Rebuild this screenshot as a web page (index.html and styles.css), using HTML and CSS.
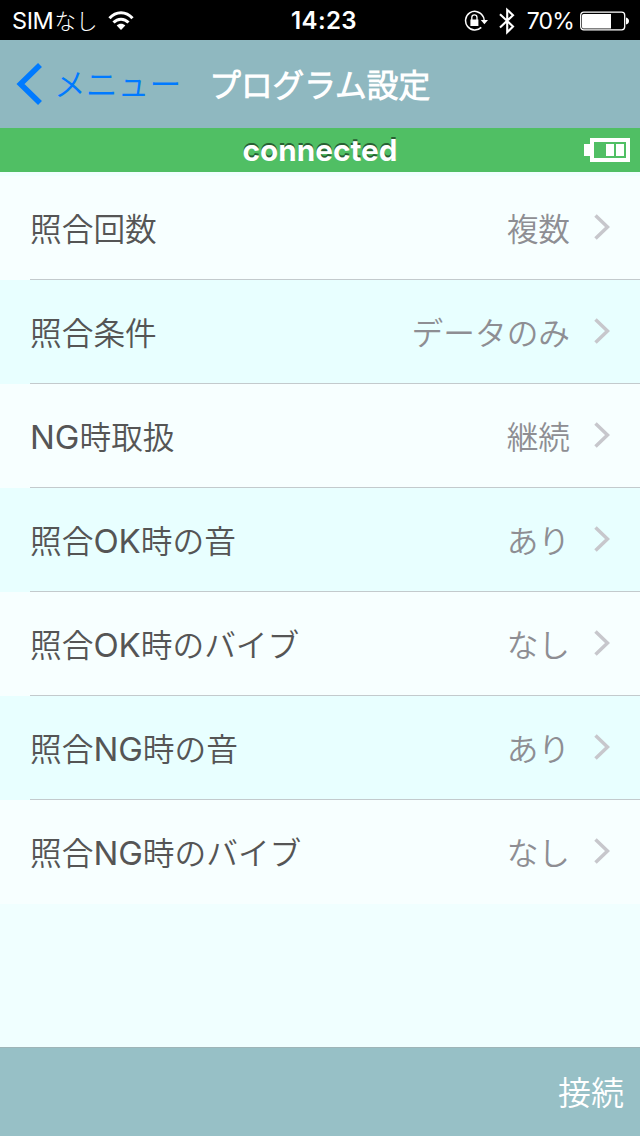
FILE: index.html
```html
<!DOCTYPE html>
<html lang="ja">
<head>
<meta charset="utf-8">
<title>プログラム設定</title>
<link rel="stylesheet" href="styles.css">
</head>
<body>
<div class="screen">
  <div class="status">
    <div class="carrier"><span class="sim">SIM</span><span class="nashi">なし</span>
      <svg class="wifi" width="26" height="20" viewBox="0 0 26 20" fill="none" stroke="#fff" stroke-width="3"><path d="M1.500 7.200C8-.2 18-.2 24.500 7.200M5.500 11.600C9.800 7 16.200 7 20.500 11.600"/><path d="M13 19L8.700 14.600C11 12 15 12 17.300 14.600Z" fill="#fff" stroke="none"/></svg>
    </div>
    <div class="time">14:23</div>
    <div class="indicators">
      <svg width="24" height="22" viewBox="0 0 24 22" fill="none" stroke="#fff"><path d="M17.300 17.400A9.300 9.300 0 1 1 19 6.200M17.500 4.300Q20.200 7 20.300 11" stroke-width="1.500"/><path d="M16.800 10H24L20.400 14.200Z" fill="#fff" stroke="none"/><path d="M7.800 10V7.500a2.600 2.600 0 0 1 5.200 0V10" stroke-width="1.300"/><path d="M6.400 9.500h8v6.500h-8z" fill="#fff" stroke="none"/></svg>
      <svg class="bt" width="16" height="28" viewBox="0 0 16 28" fill="none" stroke="#fff" stroke-width="2.100"><path d="M1 7.200L14 19.500L8.200 25.200V2.800L14 8.200L1 20.500"/></svg>
      <span class="pct">70%</span>
      <svg class="battery" width="50" height="20" viewBox="0 0 50 20"><rect x=".7" y="1.200" width="44" height="17.600" rx="3" fill="none" stroke="#fff" stroke-width="1.300"/><path d="M2 4.500Q2 3 3.500 3H31V17.500H3.500Q2 17.500 2 16ZM46 6.500Q49 7.500 49 10T46 13.500Z" fill="#fff"/></svg>
    </div>
  </div>
  <header class="nav">
    <svg class="back" width="28" height="44" viewBox="0 0 28 44" fill="none" stroke="#007aff" stroke-width="5.600"><path d="M25 3L5.500 22L25 41"/></svg>
    <span class="menu">メニュー</span>
    <h1>プログラム設定</h1>
  </header>
  <div class="connection"><span>connected</span>
    <svg width="46" height="24" viewBox="0 0 46 24" shape-rendering="crispEdges"><path d="M0 6H6V18H0Z" fill="#fff"/><rect x="8" y="2" width="36" height="20" fill="none" stroke="#fff" stroke-width="4"/><path d="M22 6h8v12h-8zM32 6h8v12h-8z" fill="#fff"/></svg>
  </div>
  <main>
    <div class="row"><span class="label">照合回数</span><span class="value">複数</span><svg class="chev" viewBox="0 0 16 26"><path d="M1.500 1.500L13.500 13L1.500 24.500"/></svg></div>
    <div class="row"><span class="label">照合条件</span><span class="value">データのみ</span><svg class="chev" viewBox="0 0 16 26"><path d="M1.500 1.500L13.500 13L1.500 24.500"/></svg></div>
    <div class="row"><span class="label"><span class="latin">NG</span>時取扱</span><span class="value">継続</span><svg class="chev" viewBox="0 0 16 26"><path d="M1.500 1.500L13.500 13L1.500 24.500"/></svg></div>
    <div class="row"><span class="label">照合<span class="latin">OK</span>時の音</span><span class="value">あり</span><svg class="chev" viewBox="0 0 16 26"><path d="M1.500 1.500L13.500 13L1.500 24.500"/></svg></div>
    <div class="row"><span class="label">照合<span class="latin">OK</span>時のバイブ</span><span class="value">なし</span><svg class="chev" viewBox="0 0 16 26"><path d="M1.500 1.500L13.500 13L1.500 24.500"/></svg></div>
    <div class="row"><span class="label">照合<span class="latin">NG</span>時の音</span><span class="value">あり</span><svg class="chev" viewBox="0 0 16 26"><path d="M1.500 1.500L13.500 13L1.500 24.500"/></svg></div>
    <div class="row last"><span class="label">照合<span class="latin">NG</span>時のバイブ</span><span class="value">なし</span><svg class="chev" viewBox="0 0 16 26"><path d="M1.500 1.500L13.500 13L1.500 24.500"/></svg></div>
  </main>
  <footer>接続</footer>
</div>
</body>
</html>
```
FILE: styles.css
```css
* { box-sizing: border-box; }
body { margin: 0; font-family: "Noto Sans CJK JP DemiLight", "Noto Sans CJK JP", sans-serif; font-weight: 350; }
svg { display: block; flex: none; }
.screen { width: 640px; height: 1136px; display: flex; flex-direction: column; background: #f0ffff; overflow: hidden; white-space: nowrap; }
.status { height: 40px; flex: none; display: grid; grid-template-columns: 291px 1fr auto; align-items: center; background: #000; color: #fff; font-family: Inter, "Noto Sans CJK JP", sans-serif; font-size: 23px; line-height: 40px; }
.carrier { display: flex; align-items: center; padding-left: 12px; }
.sim { font-weight: 400; font-size: 23.500px; letter-spacing: -.4px; padding-top: 1px; }
.nashi { font-family: "Noto Sans CJK JP", sans-serif; font-weight: 300; font-size: 21.500px; height: 40px; line-height: 37px; margin-left: 1px; }
.wifi { margin-left: 11px; }
.time { font-size: 24px; font-weight: 600; letter-spacing: .4px; padding-top: 1px; }
.indicators { display: flex; align-items: center; justify-content: flex-end; padding-right: 10px; }
.bt { margin-left: 11px; }
.pct { margin: 0 6px 0 12px; padding-top: 1px; font-size: 23px; letter-spacing: -.8px; font-weight: 400; }
.nav { height: 88px; flex: none; display: flex; align-items: center; background: #8fb8c0; padding-left: 15px; }
.menu { color: #007aff; font-size: 31.800px; margin-left: 11px; padding-bottom: 4px; }
h1 { margin: 0 0 0 28px; padding-bottom: 2px; color: #fff; font-size: 31.700px; font-weight: 700; }
.connection { height: 44px; flex: none; display: grid; grid-template-columns: 1fr auto 1fr; align-items: center; background: #50bf64; color: #fff; font: 700 29.700px/42px Inter, sans-serif; text-shadow: 0 -2px 0 #286032; padding: 0 10px; }
.connection span { grid-column: 2; }
.connection svg { justify-self: end; }
main { flex: 1; padding-top: 4px; }
.row { height: 104px; display: flex; align-items: center; padding-right: 30px; background: linear-gradient(#c3cacd, #c3cacd) 30px 103px / 610px 1px no-repeat #f7ffff; color: #555; font-size: 31.700px; line-height: 46px; }
.row:nth-child(even) { background-color: #e8ffff; }
.row.last { background: #f7ffff; }
.label { margin-left: 30px; padding-bottom: 2px; }
.latin { font-family: Inter, sans-serif; font-size: 33px; font-weight: 400; line-height: 1; }
.value { margin-left: auto; padding-bottom: 2px; color: #8e8e93; }
.chev { width: 16px; height: 26px; margin: -2px 0 0 24px; fill: none; stroke: #c7c7cc; stroke-width: 3.500; }
footer { height: 89px; flex: none; border-top: 1px solid #9eb5b8; background: #97c0c6; color: #fff; display: flex; align-items: center; justify-content: flex-end; padding: 0 16px 2px; font-size: 33px; }
```
